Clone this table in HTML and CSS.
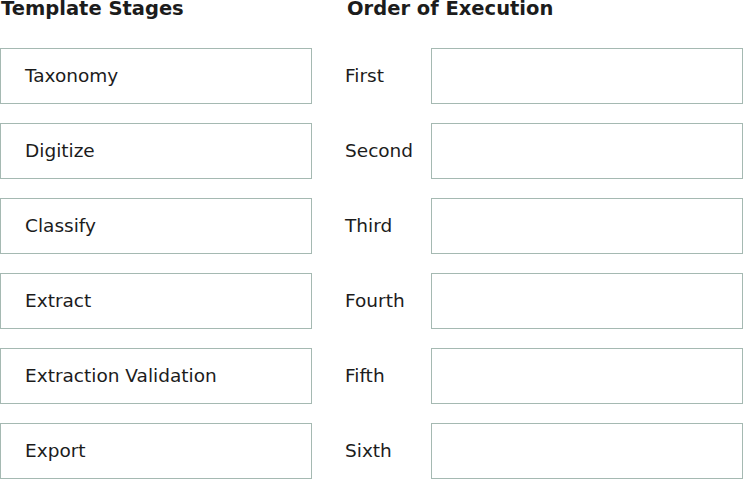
FILE: index.html
```html
<!DOCTYPE html>
<html>
<head>
<meta charset="utf-8">
<link rel="stylesheet" href="styles.css">
</head>
<body>
<div class="board">
  <div class="head head-left">Template Stages</div>
  <div class="head head-right">Order of Execution</div>

  <div class="stage">Taxonomy</div>
  <div class="label">First</div>
  <div class="slot"></div>

  <div class="stage">Digitize</div>
  <div class="label">Second</div>
  <div class="slot"></div>

  <div class="stage">Classify</div>
  <div class="label">Third</div>
  <div class="slot"></div>

  <div class="stage">Extract</div>
  <div class="label">Fourth</div>
  <div class="slot"></div>

  <div class="stage">Extraction Validation</div>
  <div class="label">Fifth</div>
  <div class="slot"></div>

  <div class="stage">Export</div>
  <div class="label">Sixth</div>
  <div class="slot"></div>
</div>
</body>
</html>
```
FILE: styles.css
```css
html, body {
  margin: 0;
  padding: 0;
  background: #ffffff;
}
body {
  font-family: "DejaVu Sans", Verdana, sans-serif;
  color: #1c1c1c;
  width: 743px;
  height: 479px;
  overflow: hidden;
}
.board {
  display: grid;
  grid-template-columns: 312px 119px 312px;
  grid-template-rows: 29px repeat(6, 56px);
  row-gap: 19px;
}
.head {
  font-weight: bold;
  font-size: 19.5px;
  line-height: 18px;
  padding-top: 0;
  align-self: start;
}
.head-left {
  padding-left: 1px;
}
.head-right {
  grid-column: 2 / 4;
  padding-left: 35px;
}
.stage {
  box-sizing: border-box;
  border: 1.5px solid #a5b9b2;
  display: flex;
  align-items: center;
  padding-left: 24px;
  padding-bottom: 2px;
  font-size: 18.5px;
}
.label {
  display: flex;
  align-items: center;
  padding-left: 33px;
  padding-bottom: 2px;
  font-size: 18.5px;
}
.slot {
  box-sizing: border-box;
  border: 1.5px solid #a5b9b2;
}
```
